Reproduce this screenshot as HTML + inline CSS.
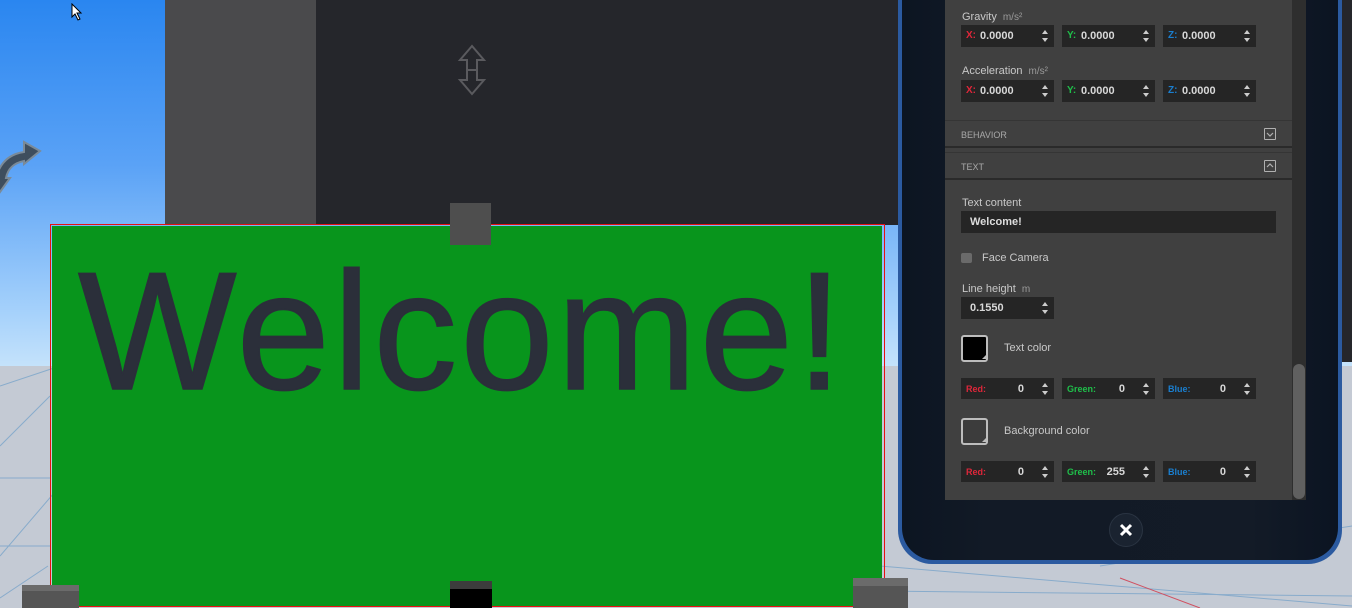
<!DOCTYPE html>
<html><head><meta charset="utf-8"><style>
*{margin:0;padding:0;box-sizing:border-box}
body{width:1352px;height:608px;overflow:hidden;position:relative;font-family:"Liberation Sans",sans-serif;background:#c5cbd5}
.abs{position:absolute}
.sky{left:0;top:0;width:1352px;height:366px;background:linear-gradient(#2a86f0 0%,#5aa2f6 45%,#a5d1fb 85%,#c4e2fb 100%)}
.floor{left:0;top:366px;width:1352px;height:242px;background:#c4cad4}
.lbl{color:#c8c8c8;font-size:11px}
.unit{color:#9a9a9a;font-size:10px;margin-left:6px}
.inp{position:absolute;height:22px;width:93px;background:#252525;color:#d8d8d8;font-size:11px;font-weight:bold}
.inp .a{position:absolute;left:5px;top:5px;font-size:10px}
.inp .v{position:absolute;left:19px;top:5px}
.sp{position:absolute;right:5px;top:4px;width:7px;height:14px}
.sp:before{content:"";position:absolute;left:0;top:1px;border-left:3.5px solid transparent;border-right:3.5px solid transparent;border-bottom:4px solid #ccc}
.sp:after{content:"";position:absolute;left:0;bottom:1px;border-left:3.5px solid transparent;border-right:3.5px solid transparent;border-top:4px solid #ccc}
.r{color:#e0263a}.g{color:#1fbf4a}.b{color:#1a7fd0}
.c .a{font-size:9px;top:6px}
.c .v{left:auto;right:30px}
.hdr{position:absolute;left:945px;width:347px;height:28px;background:#404040;border-top:1px solid #353535;border-bottom:2px solid #2a2a2a;color:#a8a8a8;font-size:9px;padding:9px 0 0 16px}
.hdr .ic{position:absolute;right:16px;top:7px;width:12px;height:12px;border:1px solid #b0b0b0;border-radius:1px}
</style></head><body>
<div class="abs sky"></div>
<div class="abs floor"></div>
<svg class="abs" style="left:0;top:366px" width="1352" height="242">
<g stroke="#6f9fc8" stroke-width="1" fill="none" opacity=".7">
<line x1="0" y1="20" x2="60" y2="0"/><line x1="0" y1="80" x2="50" y2="30"/><line x1="0" y1="190" x2="60" y2="120"/><line x1="0" y1="232" x2="48" y2="200"/>
<line x1="0" y1="180" x2="50" y2="180"/><line x1="0" y1="112" x2="50" y2="112"/>
<line x1="880" y1="200" x2="1352" y2="240"/><line x1="1100" y1="200" x2="1352" y2="160"/><line x1="880" y1="225" x2="1352" y2="230"/>
</g>
<line x1="1120" y1="212" x2="1200" y2="242" stroke="#d05060"/>
</svg>
<div class="abs" style="left:165px;top:0;width:151px;height:225px;background:#4a4a4c"></div>
<div class="abs" style="left:316px;top:0;width:590px;height:225px;background:#25262b"></div>
<svg class="abs" style="left:456px;top:44px" width="32" height="52" viewBox="0 0 32 52"><path d="M16 2 L28 16 L21 16 L21 36 L28 36 L16 50 L4 36 L11 36 L11 16 L4 16 Z M11 26 L21 26" fill="none" stroke="#5a5a5e" stroke-width="2"/></svg>
<svg class="abs" style="left:0;top:134px" width="44" height="62" viewBox="0 0 44 62"><path d="M-4 44 C0 28 10 20 24 18 L24 8 L40 17 L24 30 L24 27 C14 29 8 34 6 44 L10 44 L0 58 L-6 44 Z" fill="#3e4e5e" stroke="#7a8a98" stroke-width="2"/></svg>
<svg class="abs" style="left:71px;top:3px" width="12" height="18" viewBox="0 0 12 18"><path d="M1 1 L1 14 L4 11 L7 17 L9 16 L6 10 L10 10 Z" fill="#fff" stroke="#000" stroke-width="1"/></svg>
<div class="abs" style="left:50px;top:224px;width:835px;height:383px;border:1px solid #e81010"></div>
<div class="abs" style="left:52px;top:226px;width:830px;height:380px;background:#08951c;overflow:hidden">
<div style="position:absolute;left:26px;top:21px;font-family:'Liberation Sans',sans-serif;font-size:168px;line-height:168px;color:#2b2f3a;-webkit-text-stroke:1.5px #2b2f3a;letter-spacing:3px;white-space:nowrap">Welcome!</div>
</div>
<div class="abs" style="left:450px;top:203px;width:41px;height:42px;background:#4e4e4e"></div>
<div class="abs" style="left:450px;top:581px;width:42px;height:27px;background:#000;border-top:8px solid #3c3c3c"></div>
<div class="abs" style="left:22px;top:585px;width:57px;height:23px;background:#555;border-top:6px solid #6b6b6b"></div>
<div class="abs" style="left:853px;top:578px;width:55px;height:30px;background:#555;border-top:8px solid #6b6b6b"></div>
<div class="abs" style="left:1335px;top:0;width:17px;height:362px;background:#25262b"></div>
<div class="abs" style="left:898px;top:-20px;width:444px;height:584px;background:#2b5aa0;border-radius:0 0 34px 34px"></div>
<div class="abs" style="left:902px;top:-20px;width:436px;height:580px;background:linear-gradient(90deg,#0c1522,#121a26 20%,#131b27 80%,#0b1422);border-radius:0 0 32px 32px"></div>
<div class="abs" style="left:945px;top:0;width:347px;height:500px;background:#404040"></div>
<div class="abs" style="left:1292px;top:0;width:14px;height:500px;background:#2e2e2e"></div>
<div class="abs" style="left:1293px;top:364px;width:12px;height:135px;background:#606060;border-radius:6px"></div>
<div class="abs lbl" style="left:962px;top:11px">Gravity<span class="unit">m/s²</span></div>
<div class="inp" style="left:961px;top:25px"><span class="a r">X:</span><span class="v">0.0000</span><i class="sp"></i></div>
<div class="inp" style="left:1062px;top:25px"><span class="a g">Y:</span><span class="v">0.0000</span><i class="sp"></i></div>
<div class="inp" style="left:1163px;top:25px"><span class="a b">Z:</span><span class="v">0.0000</span><i class="sp"></i></div>
<div class="abs lbl" style="left:962px;top:65px">Acceleration<span class="unit">m/s²</span></div>
<div class="inp" style="left:961px;top:80px"><span class="a r">X:</span><span class="v">0.0000</span><i class="sp"></i></div>
<div class="inp" style="left:1062px;top:80px"><span class="a g">Y:</span><span class="v">0.0000</span><i class="sp"></i></div>
<div class="inp" style="left:1163px;top:80px"><span class="a b">Z:</span><span class="v">0.0000</span><i class="sp"></i></div>
<div class="hdr" style="top:120px">BEHAVIOR<span class="ic"><svg width="10" height="10" style="position:absolute;left:0;top:0"><path d="M2 4 L5 7 L8 4" fill="none" stroke="#b0b0b0" stroke-width="1.2"/></svg></span></div>
<div class="hdr" style="top:152px">TEXT<span class="ic"><svg width="10" height="10" style="position:absolute;left:0;top:0"><path d="M2 6 L5 3 L8 6" fill="none" stroke="#b0b0b0" stroke-width="1.2"/></svg></span></div>
<div class="abs lbl" style="left:962px;top:197px">Text content</div>
<div class="abs" style="left:961px;top:211px;width:315px;height:22px;background:#252525;color:#ddd;font-size:11px;font-weight:bold;padding:5px 9px">Welcome!</div>
<div class="abs" style="left:961px;top:253px;width:11px;height:10px;background:#6a6a6a;border-radius:2px"></div>
<div class="abs lbl" style="left:982px;top:252px">Face Camera</div>
<div class="abs lbl" style="left:962px;top:283px">Line height<span class="unit">m</span></div>
<div class="inp" style="left:961px;top:297px"><span class="v" style="left:9px">0.1550</span><i class="sp"></i></div>
<div class="abs" style="left:961px;top:335px;width:27px;height:27px;background:#000;border:2px solid #bdbdbd;border-radius:3px"></div>
<div class="abs" style="left:982px;top:355px;border-left:4px solid transparent;border-bottom:4px solid #bdbdbd"></div>
<div class="abs lbl" style="left:1004px;top:342px">Text color</div>
<div class="inp c" style="left:961px;top:378px;height:21px"><span class="a r">Red:</span><span class="v">0</span><i class="sp"></i></div>
<div class="inp c" style="left:1062px;top:378px;height:21px"><span class="a g">Green:</span><span class="v">0</span><i class="sp"></i></div>
<div class="inp c" style="left:1163px;top:378px;height:21px"><span class="a b">Blue:</span><span class="v">0</span><i class="sp"></i></div>
<div class="abs" style="left:961px;top:418px;width:27px;height:27px;background:#3c3c3c;border:2px solid #bdbdbd;border-radius:3px"></div>
<div class="abs" style="left:982px;top:438px;border-left:4px solid transparent;border-bottom:4px solid #bdbdbd"></div>
<div class="abs lbl" style="left:1004px;top:425px">Background color</div>
<div class="inp c" style="left:961px;top:461px;height:21px"><span class="a r">Red:</span><span class="v">0</span><i class="sp"></i></div>
<div class="inp c" style="left:1062px;top:461px;height:21px"><span class="a g">Green:</span><span class="v" style="right:30px">255</span><i class="sp"></i></div>
<div class="inp c" style="left:1163px;top:461px;height:21px"><span class="a b">Blue:</span><span class="v">0</span><i class="sp"></i></div>
<div class="abs" style="left:1109px;top:513px;width:34px;height:34px;border-radius:50%;background:#1a2330;border:1px solid #2a3442"></div>
<svg class="abs" style="left:1118px;top:522px" width="16" height="16"><path d="M3 3 L13 13 M13 3 L3 13" stroke="#fff" stroke-width="3"/></svg>
</body></html>
